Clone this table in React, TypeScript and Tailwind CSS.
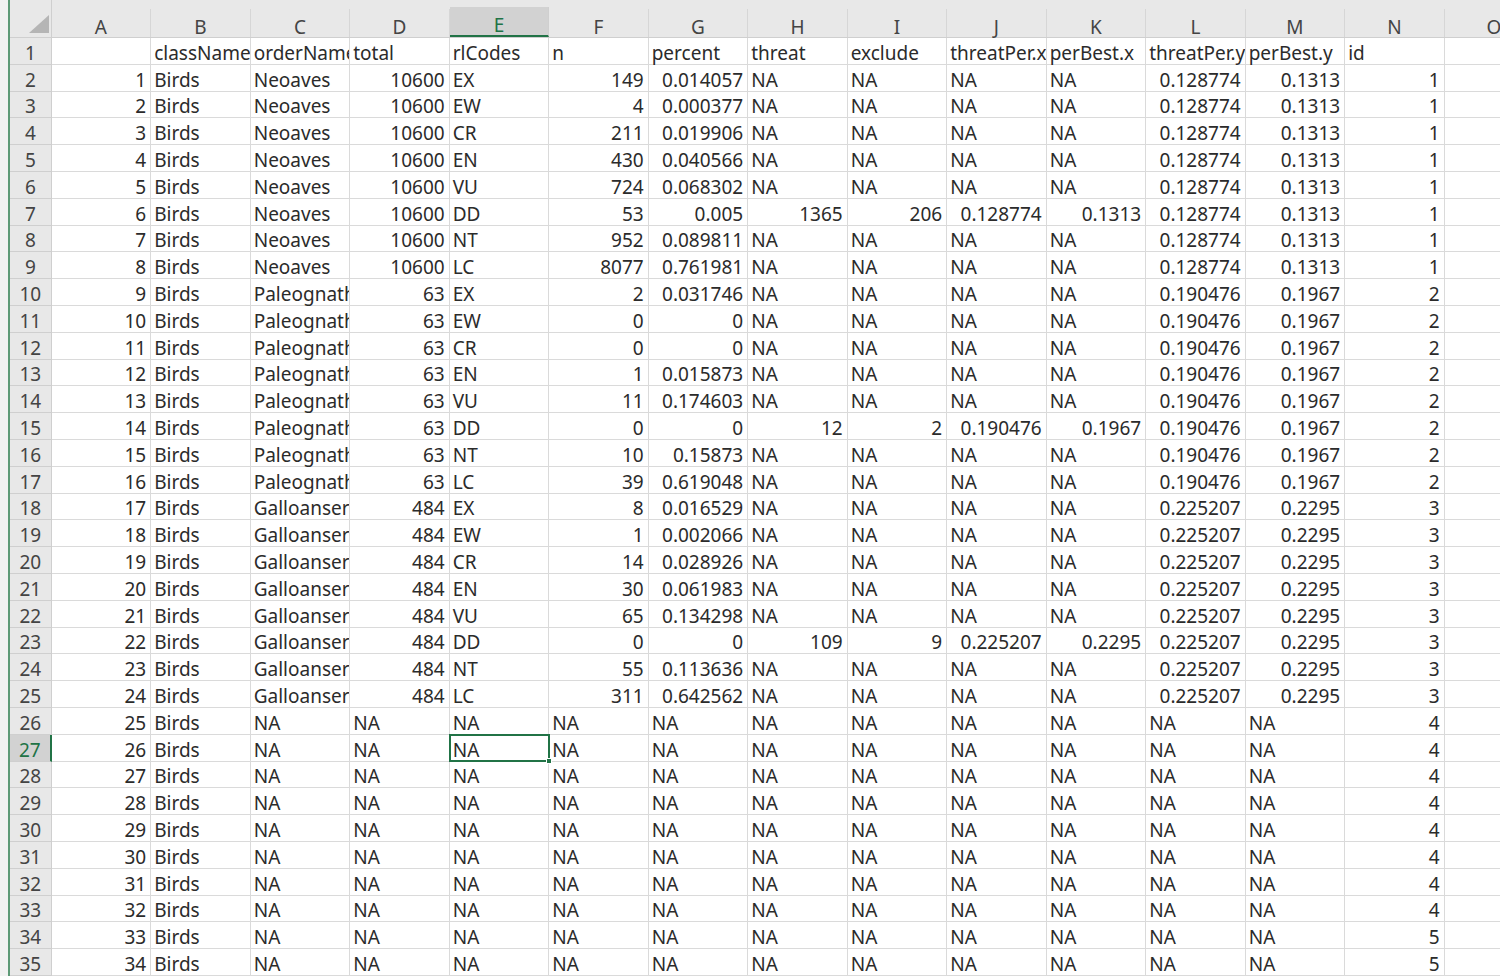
import React from 'react'

const COLS = ['A', 'B', 'C', 'D', 'E', 'F', 'G', 'H', 'I', 'J', 'K', 'L', 'M', 'N', 'O']

const CODES = ['EX', 'EW', 'CR', 'EN', 'VU', 'DD', 'NT', 'LC']

type Group = {
  order: string
  total: string
  n: string[]
  pct: string[]
  dd: [string, string, string, string]
  per: string
  best: string
  id: string
}

const GROUPS: Group[] = [
  {
    order: 'Neoaves', total: '10600',
    n: ['149', '4', '211', '430', '724', '53', '952', '8077'],
    pct: ['0.014057', '0.000377', '0.019906', '0.040566', '0.068302', '0.005', '0.089811', '0.761981'],
    dd: ['1365', '206', '0.128774', '0.1313'], per: '0.128774', best: '0.1313', id: '1',
  },
  {
    order: 'Paleognathae', total: '63',
    n: ['2', '0', '0', '1', '11', '0', '10', '39'],
    pct: ['0.031746', '0', '0', '0.015873', '0.174603', '0', '0.15873', '0.619048'],
    dd: ['12', '2', '0.190476', '0.1967'], per: '0.190476', best: '0.1967', id: '2',
  },
  {
    order: 'Galloanseres', total: '484',
    n: ['8', '1', '14', '30', '65', '0', '55', '311'],
    pct: ['0.016529', '0.002066', '0.028926', '0.061983', '0.134298', '0', '0.113636', '0.642562'],
    dd: ['109', '9', '0.225207', '0.2295'], per: '0.225207', best: '0.2295', id: '3',
  },
]

function buildRows(): string[][] {
  const rows: string[][] = []
  rows.push(['', 'className', 'orderName', 'total', 'rlCodes', 'n', 'percent', 'threat', 'exclude', 'threatPer.x', 'perBest.x', 'threatPer.y', 'perBest.y', 'id', ''])
  let k = 1
  GROUPS.forEach(g => {
    CODES.forEach((c, i) => {
      const isDD = c === 'DD'
      rows.push([
        String(k++), 'Birds', g.order, g.total, c, g.n[i], g.pct[i],
        isDD ? g.dd[0] : 'NA', isDD ? g.dd[1] : 'NA', isDD ? g.dd[2] : 'NA', isDD ? g.dd[3] : 'NA',
        g.per, g.best, g.id, '',
      ])
    })
  })
  while (k <= 34) {
    const r = [String(k), 'Birds']
    for (let j = 0; j < 11; j++) r.push('NA')
    r.push(k <= 32 ? '4' : '5', '')
    rows.push(r)
    k++
  }
  return rows
}

const ROWS = buildRows()
const isNum = (v: string) => /^-?\d+(\.\d+)?$/.test(v)

export default function App() {
  return (
    <div
      className="w-[1500px] h-[976px] overflow-hidden bg-white flex text-[#2b2b2b]"
      style={{ fontFamily: '"Noto Sans", "Noto Sans CJK SC", sans-serif' }}
    >
      {/* window edge */}
      <div className="w-[8px] shrink-0 bg-[#f2f2f2]" />
      <div className="w-[2px] shrink-0 bg-[#5e9a77]" />

      <div className="flex-1 flex flex-col">
        {/* column header */}
        <div className="h-[38px] shrink-0 flex bg-[#e8e8e8] border-b border-[#cfcfcf]">
          <div className="w-[41.7px] shrink-0 flex items-end justify-end pr-[2px] pb-[4px] border-r border-[#cfcfcf]">
            <svg width="20" height="18" viewBox="0 0 20 18">
              <polygon points="20,0 20,18 0,18" fill="#b5b5b5" />
            </svg>
          </div>
          {COLS.map(c => {
            const sel = c === 'E'
            return (
              <div key={c} className="w-[99.5px] shrink-0 flex flex-col">
                <div className="h-[12px]" />
                <div
                  className={
                    sel
                      ? 'flex-1 flex items-center justify-center pt-[8px] leading-[20px] bg-[#d2d2d2] text-[#217346] border-r border-[#cfcfcf] border-b-2 border-b-[#217346] text-[19px]'
                      : 'flex-1 flex items-center justify-center pt-[8px] leading-[20px] text-[#444] border-r border-[#d6d6d6] text-[19px]'
                  }
                >
                  {c}
                </div>
              </div>
            )
          })}
        </div>

        {/* rows */}
        {ROWS.map((row, ri) => {
          const rowSel = ri === 26
          return (
            <div key={ri} className="h-[26.8px] shrink-0 flex">
              <div
                className={
                  rowSel
                    ? 'w-[41.7px] shrink-0 flex items-center justify-center pt-[4px] leading-[20px] bg-[#d2d2d2] text-[#217346] border-r-2 border-[#217346] border-b border-b-[#cfcfcf] text-[19px]'
                    : 'w-[41.7px] shrink-0 flex items-center justify-center pt-[4px] leading-[20px] bg-[#e8e8e8] text-[#444] border-r border-b border-[#cfcfcf] text-[19px]'
                }
              >
                {ri + 1}
              </div>
              {row.map((v, ci) => {
                const sel = rowSel && ci === 4
                return (
                  <div
                    key={ci}
                    className="relative w-[99.5px] shrink-0 flex border-r border-b border-[#dadada]"
                  >
                    <div
                      className={
                        isNum(v) && ri > 0
                          ? 'flex-1 min-w-0 flex items-center justify-end pr-[4px] pt-[4px] leading-[20px] whitespace-nowrap overflow-x-clip text-[19px]'
                          : 'flex-1 min-w-0 flex items-center justify-start pl-[3px] pt-[4px] leading-[20px] whitespace-nowrap overflow-x-clip text-[19px]'
                      }
                    >
                      {v}
                    </div>
                    {sel && (
                      <div className="absolute z-10 -left-[1px] -top-[1px] w-[101px] h-[28px] border-2 border-[#217346] pointer-events-none">
                        <div className="absolute -right-[4px] -bottom-[4px] w-[6px] h-[6px] bg-[#217346] border border-white" />
                      </div>
                    )}
                  </div>
                )
              })}
            </div>
          )
        })}
      </div>
    </div>
  )
}
